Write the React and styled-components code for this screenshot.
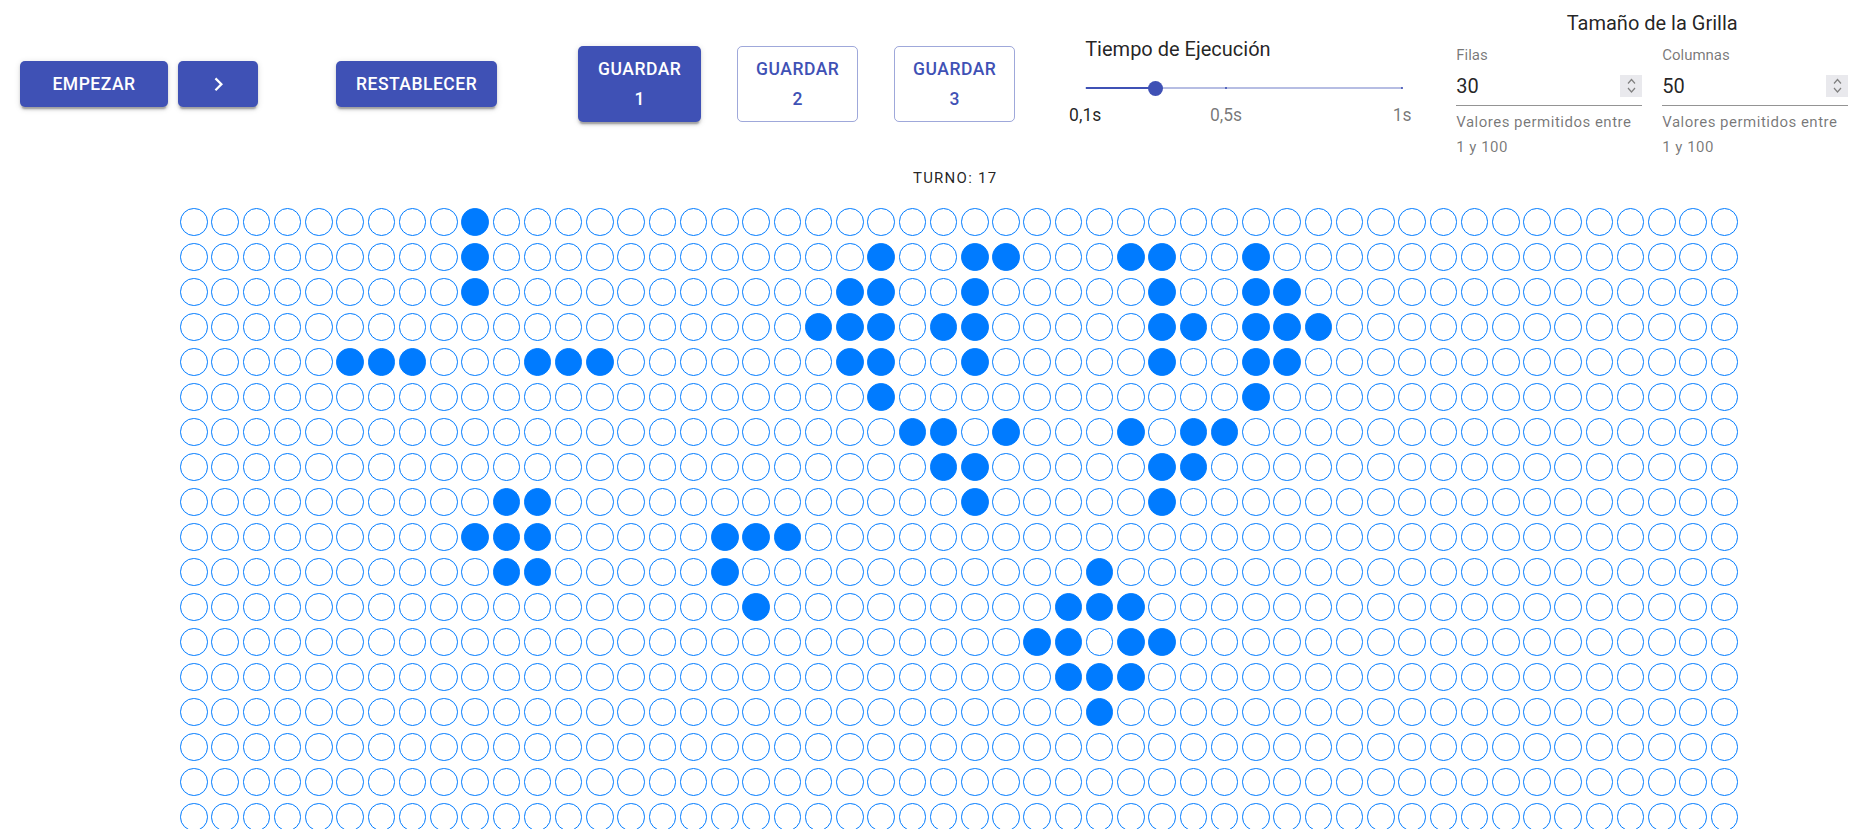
import React from 'react';
import styled, { createGlobalStyle } from 'styled-components';

const Global = createGlobalStyle`
  html { scrollbar-width: none; }
  html::-webkit-scrollbar { display: none; }
  body {
    margin: 0;
    background: #fff;
    color: rgba(0, 0, 0, 0.87);
    font-family: Roboto, "Helvetica Neue", Arial, sans-serif;
  }
  *, *::before, *::after { box-sizing: border-box; }
`;

const INDIGO = '#3f51b5';
const ROWS = 30;
const COLS = 50;

const ALIVE = {
  0: [9],
  1: [9, 22, 25, 26, 30, 31, 34],
  2: [9, 21, 22, 25, 31, 34, 35],
  3: [20, 21, 22, 24, 25, 31, 32, 34, 35, 36],
  4: [5, 6, 7, 11, 12, 13, 21, 22, 25, 31, 34, 35],
  5: [22, 34],
  6: [23, 24, 26, 30, 32, 33],
  7: [24, 25, 31, 32],
  8: [10, 11, 25, 31],
  9: [9, 10, 11, 17, 18, 19],
  10: [10, 11, 17, 29],
  11: [18, 28, 29, 30],
  12: [27, 28, 30, 31],
  13: [28, 29, 30],
  14: [29],
};

const Page = styled.div`
  width: 100%;
`;

const Header = styled.header`
  display: flex;
  align-items: flex-start;
  height: 168px;
  padding-left: 20px;
`;

const ButtonGroup = styled.div`
  display: flex;
  gap: ${(p) => p.$gap || 0}px;
  margin-top: ${(p) => p.$top}px;
  margin-left: ${(p) => p.$left || 0}px;
`;

const Button = styled.button`
  display: inline-flex;
  flex-direction: column;
  align-items: center;
  justify-content: center;
  min-width: 80px;
  width: ${(p) => (p.$w ? `${p.$w}px` : 'auto')};
  padding: ${(p) => (p.$outlined ? '6.25px 18.75px' : '7.5px 20px')};
  border: ${(p) => (p.$outlined ? '1.25px solid rgba(63, 81, 181, 0.5)' : 'none')};
  border-radius: 5px;
  background: ${(p) => (p.$outlined ? 'transparent' : INDIGO)};
  color: ${(p) => (p.$outlined ? INDIGO : '#fff')};
  box-shadow: ${(p) =>
    p.$outlined
      ? 'none'
      : '0 3.75px 1.25px -2.5px rgba(0,0,0,0.2), 0 2.5px 2.5px 0 rgba(0,0,0,0.14), 0 1.25px 6.25px 0 rgba(0,0,0,0.12)'};
  font-family: Roboto, "Helvetica Neue", Arial, sans-serif;
  font-weight: 500;
  font-size: 17.5px;
  line-height: 30.6px;
  letter-spacing: 0.5px;
  text-transform: uppercase;
  cursor: pointer;
`;

const NextIcon = styled.svg`
  display: block;
  width: 27px;
  height: 30.6px;
  fill: currentColor;
`;

const SpeedBlock = styled.div`
  display: flex;
  flex-direction: column;
  width: 317px;
  margin-left: 70px;
  margin-top: 34px;
`;

const BlockTitle = styled.div`
  font-size: 20px;
  line-height: 30px;
  color: rgba(0, 0, 0, 0.87);
  text-align: ${(p) => (p.$center ? 'center' : 'left')};
  margin-bottom: ${(p) => p.$mb || 0}px;
`;

const SliderRoot = styled.div`
  position: relative;
  height: 66px;
`;

const Rail = styled.span`
  position: absolute;
  left: 0;
  right: 0;
  top: 22.75px;
  height: 2.5px;
  background: ${INDIGO};
  opacity: 0.38;
`;

const Track = styled.span`
  position: absolute;
  left: 0;
  top: 22.75px;
  height: 2.5px;
  background: ${INDIGO};
`;

const Mark = styled.span`
  position: absolute;
  top: 22.75px;
  width: 2.5px;
  height: 2.5px;
  margin-left: -1.25px;
  background: ${(p) => (p.$active ? '#fff' : INDIGO)};
  opacity: 0.8;
`;

const Thumb = styled.span`
  position: absolute;
  top: 16.5px;
  width: 15px;
  height: 15px;
  margin-left: -7.5px;
  border-radius: 50%;
  background: ${INDIGO};
`;

const MarkLabel = styled.span`
  position: absolute;
  top: 39px;
  transform: translateX(-50%);
  white-space: nowrap;
  font-size: 17.5px;
  line-height: 25px;
  color: ${(p) => (p.$active ? 'rgba(0,0,0,0.87)' : 'rgba(0,0,0,0.54)')};
`;

const SizeBlock = styled.div`
  width: 392px;
  margin-left: 54px;
  margin-top: 8px;
`;

const Fields = styled.div`
  display: flex;
  gap: 20px;
`;

const Field = styled.div`
  display: flex;
  flex-direction: column;
  width: 186px;
`;

const FieldLabel = styled.label`
  display: block;
  height: 20px;
  padding-top: 1.9px;
  font-size: 15px;
  line-height: 15px;
  color: rgba(0, 0, 0, 0.54);
`;

const InputRow = styled.div`
  display: flex;
  align-items: center;
  height: 40px;
  border-bottom: 1.25px solid rgba(0, 0, 0, 0.42);
`;

const Input = styled.input`
  flex: 1;
  min-width: 0;
  border: 0;
  outline: 0;
  padding: 0;
  background: transparent;
  font-family: Roboto, "Helvetica Neue", Arial, sans-serif;
  font-size: 20px;
  line-height: 23.75px;
  height: 23.75px;
  color: rgba(0, 0, 0, 0.87);
`;

const Spinner = styled.svg`
  display: block;
  width: 22px;
  height: 22px;
  background: #e9e9ed;
  fill: none;
  stroke: #808080;
  stroke-width: 1.2;
`;

const Helper = styled.p`
  margin: 3.75px 0 0;
  font-size: 15px;
  line-height: 24.9px;
  letter-spacing: 0.5px;
  color: rgba(0, 0, 0, 0.54);
`;

const Board = styled.section`
  display: flex;
  flex-direction: column;
  align-items: center;
  width: 1558.3px;
  margin-left: 180px;
`;

const Turn = styled.div`
  margin-bottom: 20px;
  padding-right: 8px;
  font-size: 15px;
  line-height: 20px;
  letter-spacing: 1.25px;
  text-transform: uppercase;
  color: rgba(0, 0, 0, 0.87);
`;

const Grid = styled.div`
  display: grid;
  grid-template-columns: repeat(${COLS}, 27.5px);
  column-gap: 3.74px;
  row-gap: 7.5px;
`;

const Cell = styled.span`
  display: block;
  width: 27.5px;
  height: 27.5px;
  border-radius: 50%;
  border: 1.25px solid #007bff;
  background: ${(p) => (p.$alive ? '#007bff' : '#fff')};
`;

function SizeField({ label, value }) {
  return (
    <Field>
      <FieldLabel>{label}</FieldLabel>
      <InputRow>
        <Input type="text" inputMode="numeric" defaultValue={value} />
        <Spinner viewBox="0 0 22 22">
          <polyline points="8,8.5 11.5,4.5 15,8.5" />
          <polyline points="8,13 11.5,17 15,13" />
        </Spinner>
      </InputRow>
      <Helper>
        Valores permitidos entre
        <br />1 y 100
      </Helper>
    </Field>
  );
}

function SpeedSlider() {
  const min = 0.1;
  const max = 1;
  const value = 0.3;
  const pct = (v) => ((v - min) / (max - min)) * 100;
  const marks = [
    { v: 0.1, label: '0,1s' },
    { v: 0.5, label: '0,5s' },
    { v: 1, label: '1s' },
  ];
  return (
    <SliderRoot>
      <Rail />
      <Track style={{ width: `${pct(value)}%` }} />
      {marks.map((m) => (
        <Mark key={m.v} $active={m.v <= value} style={{ left: `${pct(m.v)}%` }} />
      ))}
      <Thumb style={{ left: `${pct(value)}%` }} />
      {marks.map((m) => (
        <MarkLabel key={m.label} $active={m.v <= value} style={{ left: `${pct(m.v)}%` }}>
          {m.label}
        </MarkLabel>
      ))}
    </SliderRoot>
  );
}

export default function App() {
  const cells = [];
  for (let r = 0; r < ROWS; r++) {
    const alive = ALIVE[r] || [];
    for (let c = 0; c < COLS; c++) {
      cells.push(<Cell key={`${r}-${c}`} $alive={alive.includes(c)} />);
    }
  }

  return (
    <Page>
      <Global />
      <Header>
        <ButtonGroup $top={61} $gap={10}>
          <Button $w={148}>Empezar</Button>
          <Button>
            <NextIcon viewBox="0 0 24 24">
              <path d="M10 6L8.59 7.41 13.17 12l-4.58 4.59L10 18l6-6z" />
            </NextIcon>
          </Button>
        </ButtonGroup>
        <ButtonGroup $top={61} $left={78}>
          <Button>Restablecer</Button>
        </ButtonGroup>
        <ButtonGroup $top={46} $left={81} $gap={36}>
          <Button $w={123}>
            <span>Guardar</span>
            <span>1</span>
          </Button>
          <Button $w={121} $outlined>
            <span>Guardar</span>
            <span>2</span>
          </Button>
          <Button $w={121} $outlined>
            <span>Guardar</span>
            <span>3</span>
          </Button>
        </ButtonGroup>
        <SpeedBlock>
          <BlockTitle>Tiempo de Ejecución</BlockTitle>
          <SpeedSlider />
        </SpeedBlock>
        <SizeBlock>
          <BlockTitle $center $mb={8}>Tamaño de la Grilla</BlockTitle>
          <Fields>
            <SizeField label="Filas" value="30" />
            <SizeField label="Columnas" value="50" />
          </Fields>
        </SizeBlock>
      </Header>
      <Board>
        <Turn>Turno: 17</Turn>
        <Grid>{cells}</Grid>
      </Board>
    </Page>
  );
}
